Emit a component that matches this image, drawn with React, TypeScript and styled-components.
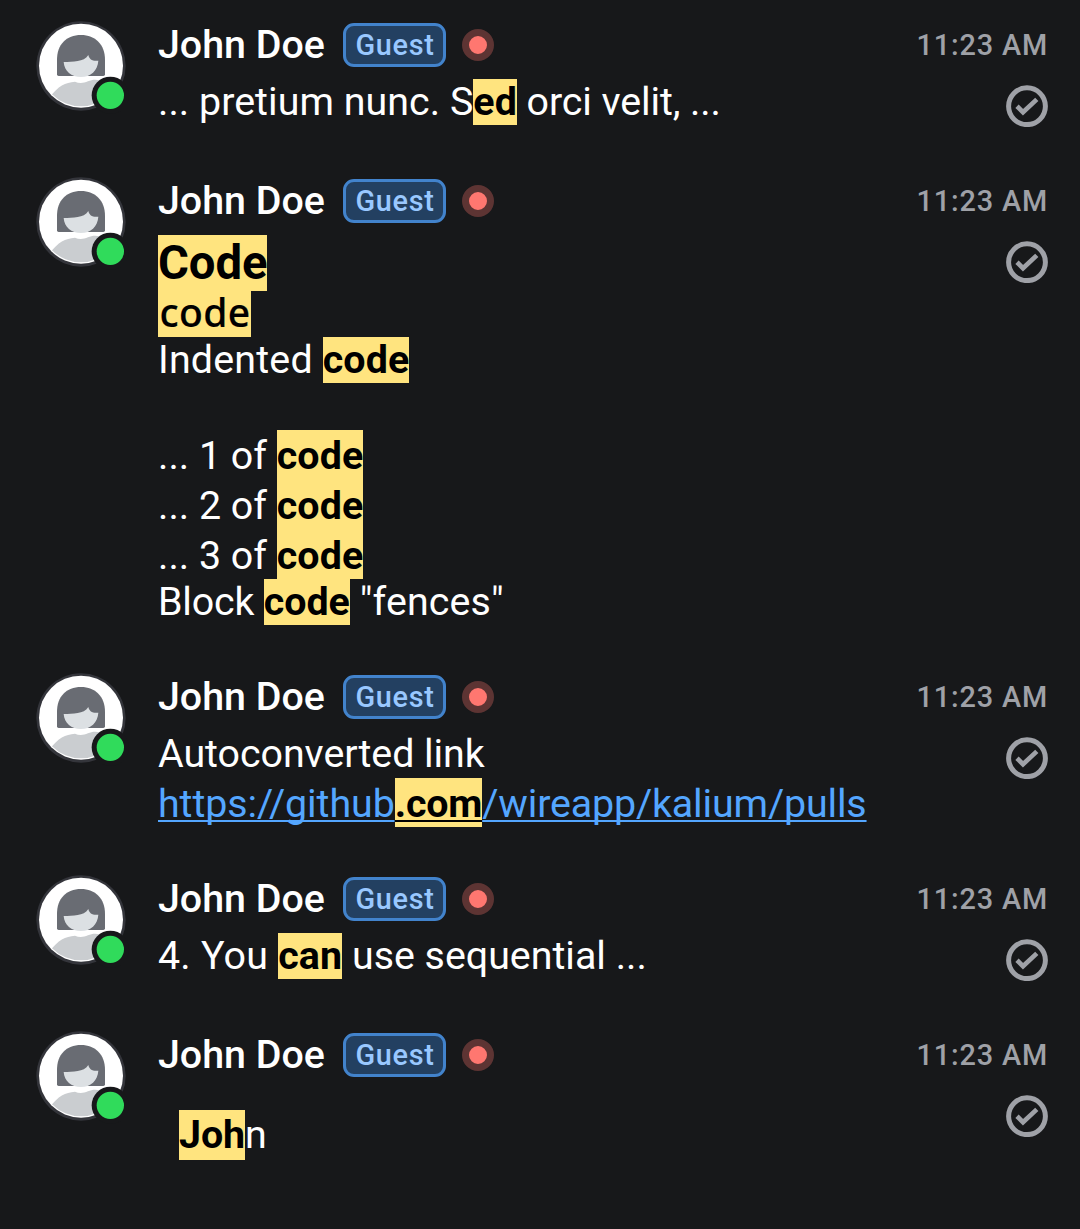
import React from "react";
import styled, { createGlobalStyle } from "styled-components";

const GlobalStyle = createGlobalStyle`
  *, *::before, *::after { box-sizing: border-box; }
  html, body { margin: 0; background: #17181a; }
`;

const Page = styled.main`
  min-height: 1229px;
  padding-top: 10px;
  overflow: hidden;
  background: #17181a;
  color: #fff;
  font-family: Roboto, sans-serif;
  font-size: 39.375px;
`;

const Message = styled.article`
  display: flex;
  gap: 24px;
  padding: 4px 32px 37px 30px;
`;

const AvatarSvg = styled.svg`
  flex: none;
  width: 104px;
  height: 104px;
  display: block;
`;

const Body = styled.div`
  flex: 1;
  min-width: 0;
  padding-top: 9px;
`;

const Header = styled.header`
  display: flex;
  align-items: center;
  height: 44px;
`;

const Name = styled.span`
  width: 185px;
  font-weight: 500;
  line-height: 44px;
  white-space: nowrap;
`;

const Badge = styled.span`
  display: flex;
  align-items: center;
  justify-content: center;
  width: 103px;
  height: 44px;
  padding-left: 1px;
  border: 3px solid #4283cc;
  border-radius: 11px;
  background: #234061;
  color: #99c8ff;
  font-size: 28.875px;
  font-weight: 500;
  letter-spacing: 0.65px;
`;

const Legal = styled.span`
  width: 32px;
  height: 32px;
  margin-left: 16px;
  border: 7px solid #5d3433;
  border-radius: 50%;
  background: #ff7770;
`;

const Time = styled.time`
  margin-left: auto;
  color: #9fa1a7;
  font-size: 28.875px;
  font-weight: 500;
  letter-spacing: 0.85px;
`;

const Content = styled.div`
  display: flex;
  justify-content: space-between;
  min-height: 50px;
  margin-top: 12px;
`;

const Text = styled.div<{ $inset?: boolean }>`
  padding: ${(p) => (p.$inset ? "21px 0 0 21px" : "0")};
`;

const Line = styled.div<{ $height?: number; $drop?: number; $size?: number; $track?: number }>`
  height: ${(p) => p.$height ?? 46}px;
  line-height: ${(p) => (p.$height ?? 46) + (p.$drop ?? 0)}px;
  font-size: ${(p) => p.$size ?? 39.375}px;
  letter-spacing: ${(p) => p.$track ?? 0}px;
  white-space: pre;
`;

const Run = styled.span<{ $track: number }>`
  letter-spacing: ${(p) => p.$track}px;
`;

const Mark = styled.mark<{ $height?: number; $track?: number }>`
  display: inline-block;
  height: ${(p) => p.$height ?? 46}px;
  background: #ffe47f;
  color: #000;
  vertical-align: top;
  font-weight: 700;
  letter-spacing: ${(p) => p.$track ?? 0.1}px;
`;

const CodeMark = styled(Mark)`
  width: 92.5px;
  padding-left: 1.5px;
  font-family: "Noto Sans", sans-serif;
  font-size: 39px;
  font-weight: 500;
  line-height: 42px;
  letter-spacing: 0.4px;
  -webkit-text-stroke: 0.2px #000;
`;

const Link = styled.a`
  color: #54a6ff;
  text-decoration: underline;
  text-decoration-thickness: 2px;
  text-underline-offset: 3px;
  text-decoration-skip-ink: none;

  ${Mark} {
    text-decoration: underline;
    text-decoration-thickness: 2px;
    text-underline-offset: 3px;
    text-decoration-skip-ink: none;
  }
`;

const CheckSvg = styled.svg`
  flex: none;
  width: 42px;
  height: 42px;
  margin-top: 6px;
`;

function Avatar() {
  return (
    <AvatarSvg viewBox="0 0 312 312">
      <defs>
        <clipPath id="shoulders">
          <circle cx="153" cy="155" r="122" />
        </clipPath>
      </defs>
      <circle cx="153" cy="156" r="134" fill="#34353b" />
      <circle cx="153" cy="155" r="126" fill="#fff" />
      <path
        d="M60 249C84 216 106 205 135 203C146 208 160 208 174 202C188 196 206 195 222 205L260 240V290H60Z"
        fill="#cacdd0"
        clipPath="url(#shoulders)"
      />
      <path d="M81 181V137C81 92 109 63 153 63C196 63 225 92 225 137V181Q225 186 220 186H86Q81 186 81 181Z" fill="#696c73" />
      <path d="M101 144C129 143 161 145 175 123C178 137 188 142 205 140C203 170 182 189 153 189C124 189 103 172 101 144Z" fill="#dce0e3" />
      <circle cx="241" cy="244" r="56" fill="#17181a" />
      <circle cx="241" cy="244" r="41" fill="#30db5b" />
    </AvatarSvg>
  );
}

function Delivered() {
  return (
    <CheckSvg viewBox="0 0 42 42" fill="none" stroke="#9fa1a7">
      <circle cx="21" cy="21.2" r="18.4" strokeWidth="5" />
      <path d="M11 21.3L17 27.2L30.8 14.4" strokeWidth="4.7" />
    </CheckSvg>
  );
}

function Result({ children, inset }: { children: React.ReactNode; inset?: boolean }) {
  return (
    <Message>
      <Avatar />
      <Body>
        <Header>
          <Name>John Doe</Name>
          <Badge>Guest</Badge>
          <Legal />
          <Time>11:23 AM</Time>
        </Header>
        <Content>
          <Text $inset={inset}>{children}</Text>
          <Delivered />
        </Content>
      </Body>
    </Message>
  );
}

export default function App() {
  return (
    <>
      <GlobalStyle />
      <Page>
        <Result>
          <Line $track={0.04}>
            ... pretium nunc. S<Mark>ed</Mark>
            <Run $track={-0.1}> orci velit, ...</Run>
          </Line>
        </Result>
        <Result>
          <Line $height={56} $size={47.25} $drop={1}><Mark $height={56} $track={-0.1}>Code</Mark></Line>
          <Line><CodeMark>code</CodeMark></Line>
          <Line $track={0.2}>Indented <Mark>code</Mark></Line>
          <Line $height={47}>{" "}</Line>
          {[1, 2, 3].map((n) => (
            <Line key={n} $height={n === 3 ? 49 : 50} $drop={n === 3 ? 3 : 2}>
              ... {n} of <Mark $height={n === 3 ? 49 : 50}>code</Mark>
            </Line>
          ))}
          <Line $track={-0.18}>
            Block <Mark $track={-0.02}>code</Mark>
            <Run $track={0.15}> "fences"</Run>
          </Line>
        </Result>
        <Result>
          <Line $height={47} $drop={-1} $track={-0.04}>Autoconverted link</Line>
          <Line $height={49} $drop={3}>
            <Link>
              <Run $track={-0.06}>https://github</Run>
              <Mark $height={49} $track={-0.2}>.com</Mark>
              <Run $track={-0.14}>/wireapp/kalium/pulls</Run>
            </Link>
          </Line>
        </Result>
        <Result>
          <Line $track={0.24}>
            4. You <Mark>can</Mark>
            <Run $track={0}> use sequential ...</Run>
          </Line>
        </Result>
        <Result inset>
          <Line $height={50}><Mark $height={50} $track={-0.05}>Joh</Mark>n</Line>
        </Result>
      </Page>
    </>
  );
}
